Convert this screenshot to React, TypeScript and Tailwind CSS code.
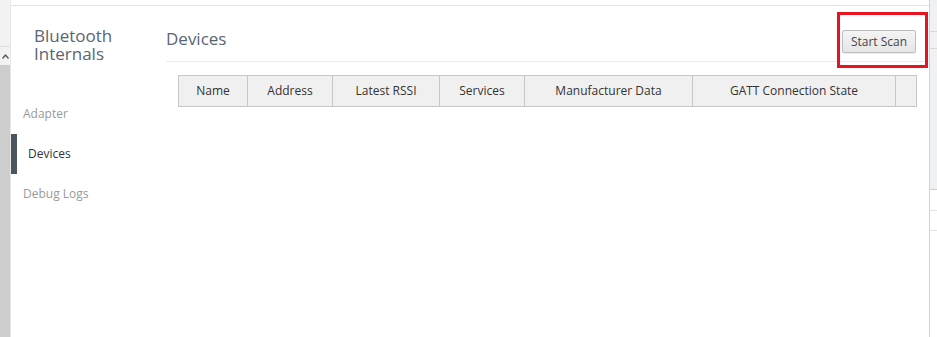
import React from "react";

const cols = [
  { label: "Name", w: "w-[69px]" },
  { label: "Address", w: "w-[85px]" },
  { label: "Latest RSSI", w: "w-[107px]" },
  { label: "Services", w: "w-[85px]" },
  { label: "Manufacturer Data", w: "w-[168px]" },
  { label: "GATT Connection State", w: "w-[203px]" },
  { label: "", w: "flex-1" },
];

export default function App() {
  return (
    <div
      className="relative flex w-[937px] h-[337px] overflow-hidden bg-white"
      style={{ fontFamily: '"Open Sans", "Noto Sans", sans-serif' }}
    >
      {/* left browser strip */}
      <div className="flex w-[10px] flex-col">
        <div className="h-[47px] bg-[#f2f2f3] border-b border-[#dedede]" />
        <div className="flex h-[18px] items-center justify-center bg-[#f2f2f3]">
          <svg width="7" height="5" viewBox="0 0 7 5">
            <path d="M0.5 4.5 L3.5 1 L6.5 4.5" fill="none" stroke="#555" strokeWidth="1.3" />
          </svg>
        </div>
        <div className="flex-1 bg-[#cdcdcd]" />
      </div>

      {/* main panel */}
      <div className="flex w-[919px] flex-col border-l border-[#e8e8e8]">
        <div className="h-[5px] bg-white" />
        <div className="flex flex-1 border-t border-[#e2e2e2]">
          {/* sidebar */}
          <div className="flex w-[155px] flex-col">
            <div className="pl-[23px] pt-[21px] text-[17px] leading-[18px] text-[#5a6472]">
              <div className="h-[18px]">Bluetooth</div>
              <div className="h-[18px]">Internals</div>
            </div>
            <div className="mt-[31px] flex flex-col text-[12px]">
              <div className="flex h-[40px] items-center pl-[12px] text-[#9a9a9a]">Adapter</div>
              <div className="flex h-[40px] items-center">
                <div className="h-[40px] w-[6px] bg-[#4a5560]" />
                <span className="pl-[11px] text-[#333]">Devices</span>
              </div>
              <div className="flex h-[40px] items-center pl-[12px] text-[#9a9a9a]">Debug Logs</div>
            </div>
          </div>

          {/* content */}
          <div className="flex flex-1 flex-col pr-[2px]">
            <div className="flex h-[56px] items-start justify-between border-b border-[#ececec]">
              <div className="pt-[23px] text-[17px] leading-[20px] text-[#5a6472]">Devices</div>
              <button className="mr-[11px] mt-[24px] h-[23px] w-[74px] rounded-[2px] border border-[#bdbdbd] bg-gradient-to-b from-[#f4f4f4] to-[#e6e6e6] text-[12px] text-[#444] shadow-[0_1px_1px_rgba(0,0,0,0.08)]">
                Start Scan
              </button>
            </div>
            <div className="ml-[12px] mr-[10px] mt-[13px] flex h-[32px] border border-[#c6c6c6] bg-[#f0f0f0] text-[12px] text-[#333]">
              {cols.map((c, i) => (
                <div
                  key={i}
                  className={`${c.w} flex items-center justify-center ${i < cols.length - 1 ? "border-r border-[#c6c6c6]" : ""}`}
                >
                  {c.label}
                </div>
              ))}
            </div>
          </div>
        </div>
      </div>

      {/* right browser strip */}
      <div className="flex w-[8px] flex-col border-l border-[#cfd2d6]">
        <div className="h-[32px] bg-[#f0f1f3] border-b border-[#d8d8d8]" />
        <div className="h-[17px] bg-[#f0f1f3] border-b border-[#d8d8d8]" />
        <div className="h-[141px] bg-[#f0f1f3] border-b border-[#cfcfcf]" />
        <div className="h-[21px] border-b border-[#e6e6e6]" />
        <div className="h-[20px] border-b border-[#e6e6e6]" />
        <div className="flex-1" />
      </div>

      {/* annotation */}
      <div className="absolute left-[837px] top-[12px] h-[56px] w-[91px] border-[3px] border-[#e8131f]" />
    </div>
  );
}
